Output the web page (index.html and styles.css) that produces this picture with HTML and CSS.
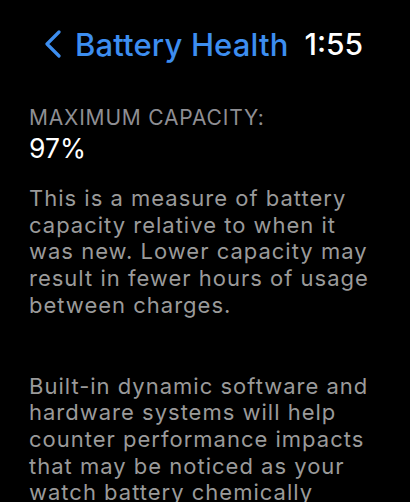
FILE: index.html
```html
<!DOCTYPE html>
<html>
<head>
<meta charset="utf-8">
<link rel="stylesheet" href="styles.css">
</head>
<body>
<div class="screen">
  <header class="nav">
    <div class="back">
      <svg class="chev" width="20" height="28" viewBox="0 0 20 28"><path d="M16 2 L4 14 L16 26" fill="none" stroke="#3d8ef0" stroke-width="3.2" stroke-linecap="round" stroke-linejoin="round"/></svg>
      <span class="title">Battery Health</span>
    </div>
    <span class="time">1:55</span>
  </header>
  <div class="content">
    <div class="label">MAXIMUM CAPACITY:</div>
    <div class="value">97%</div>
    <p class="para">This is a measure of battery capacity relative to when it was new. Lower capacity may result in fewer hours of usage between charges.</p>
    <p class="para second">Built-in dynamic software and hardware systems will help counter performance impacts that may be noticed as your watch battery chemically ages.</p>
  </div>
</div>
</body>
</html>
```
FILE: styles.css
```css
html, body {
  margin: 0;
  padding: 0;
  background: #000;
}
body {
  font-family: Inter, "Noto Sans", sans-serif;
  width: 410px;
  height: 502px;
  overflow: hidden;
}
.screen {
  padding: 0 0 0 29px;
}
.nav {
  display: flex;
  align-items: center;
  height: 88px;
  padding-left: 14px;
  box-sizing: border-box;
}
.back {
  display: flex;
  align-items: center;
  gap: 12px;
}
.chev {
  display: block;
}
.title {
  color: #3d8ef0;
  font-size: 31px;
  font-weight: 500;
  letter-spacing: 0.15px;
}
.time {
  color: #fff;
  font-size: 30px;
  font-weight: 500;
  margin-left: 16px;
}
.content {
  padding-top: 16px;
}
.label {
  color: #8e8e93;
  font-size: 21px;
  letter-spacing: 0.8px;
  line-height: 28px;
}
.value {
  color: #fff;
  font-size: 26.5px;
  line-height: 32px;
}
.para {
  margin: 21px 0 0;
  color: #9a9a9a;
  font-size: 22px;
  line-height: 26.7px;
  letter-spacing: 1px;
  width: 352px;
}
.para.second {
  margin-top: 54px;
}
```
